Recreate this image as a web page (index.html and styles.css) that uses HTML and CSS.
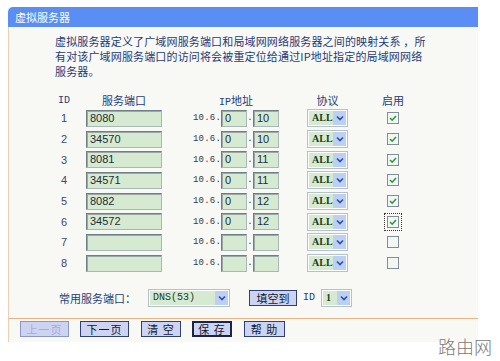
FILE: index.html
```html
<!DOCTYPE html>
<html>
<head>
<meta charset="utf-8">
<link rel="stylesheet" href="styles.css">
</head>
<body>
<div class="panel">
  <div class="title">虚拟服务器</div>
  <div class="body">
    <p class="desc">虚拟服务器定义了广域网服务端口和局域网网络服务器之间的映射关系 ，所<br>有对该广域网服务端口的访问将会被重定位给通过IP地址指定的局域网网络<br>服务器。</p>
    <div class="grid">
      <div class="c1 hd mono">ID</div>
      <div class="c2 hd"><span class="w-port">服务端口</span></div>
      <div class="c3 hd"><span class="w-ip"><span class="mono">IP</span>地址</span></div>
      <div class="c4 hd"><span class="w-sel">协议</span></div>
      <div class="c5 hd"><span class="w-chk">启用</span></div>

      <div class="c1 num">1</div>
      <div class="c2"><span class="inp port">8080</span></div>
      <div class="c3"><span class="pre">10.6.</span><span class="inp ip">0</span><span class="dot">.</span><span class="inp ip">10</span></div>
      <div class="c4"><span class="sel"><span class="val">ALL</span><span class="arr"><svg width="8" height="6" viewBox="0 0 8 6"><path d="M1 1.5 L4 4.5 L7 1.5" fill="none" stroke="#2c4fa8" stroke-width="1.6"/></svg></span></span></div>
      <div class="c5"><span class="chk on"><svg width="10" height="10" viewBox="0 0 10 10"><path d="M2 5 L4.2 7.2 L8 3" fill="none" stroke="#2a9a3a" stroke-width="1.6"/></svg></span></div>

      <div class="c1 num">2</div>
      <div class="c2"><span class="inp port">34570</span></div>
      <div class="c3"><span class="pre">10.6.</span><span class="inp ip">0</span><span class="dot">.</span><span class="inp ip">10</span></div>
      <div class="c4"><span class="sel"><span class="val">ALL</span><span class="arr"><svg width="8" height="6" viewBox="0 0 8 6"><path d="M1 1.5 L4 4.5 L7 1.5" fill="none" stroke="#2c4fa8" stroke-width="1.6"/></svg></span></span></div>
      <div class="c5"><span class="chk on"><svg width="10" height="10" viewBox="0 0 10 10"><path d="M2 5 L4.2 7.2 L8 3" fill="none" stroke="#2a9a3a" stroke-width="1.6"/></svg></span></div>

      <div class="c1 num">3</div>
      <div class="c2"><span class="inp port">8081</span></div>
      <div class="c3"><span class="pre">10.6.</span><span class="inp ip">0</span><span class="dot">.</span><span class="inp ip">11</span></div>
      <div class="c4"><span class="sel"><span class="val">ALL</span><span class="arr"><svg width="8" height="6" viewBox="0 0 8 6"><path d="M1 1.5 L4 4.5 L7 1.5" fill="none" stroke="#2c4fa8" stroke-width="1.6"/></svg></span></span></div>
      <div class="c5"><span class="chk on"><svg width="10" height="10" viewBox="0 0 10 10"><path d="M2 5 L4.2 7.2 L8 3" fill="none" stroke="#2a9a3a" stroke-width="1.6"/></svg></span></div>

      <div class="c1 num">4</div>
      <div class="c2"><span class="inp port">34571</span></div>
      <div class="c3"><span class="pre">10.6.</span><span class="inp ip">0</span><span class="dot">.</span><span class="inp ip">11</span></div>
      <div class="c4"><span class="sel"><span class="val">ALL</span><span class="arr"><svg width="8" height="6" viewBox="0 0 8 6"><path d="M1 1.5 L4 4.5 L7 1.5" fill="none" stroke="#2c4fa8" stroke-width="1.6"/></svg></span></span></div>
      <div class="c5"><span class="chk on"><svg width="10" height="10" viewBox="0 0 10 10"><path d="M2 5 L4.2 7.2 L8 3" fill="none" stroke="#2a9a3a" stroke-width="1.6"/></svg></span></div>

      <div class="c1 num">5</div>
      <div class="c2"><span class="inp port">8082</span></div>
      <div class="c3"><span class="pre">10.6.</span><span class="inp ip">0</span><span class="dot">.</span><span class="inp ip">12</span></div>
      <div class="c4"><span class="sel"><span class="val">ALL</span><span class="arr"><svg width="8" height="6" viewBox="0 0 8 6"><path d="M1 1.5 L4 4.5 L7 1.5" fill="none" stroke="#2c4fa8" stroke-width="1.6"/></svg></span></span></div>
      <div class="c5"><span class="chk on"><svg width="10" height="10" viewBox="0 0 10 10"><path d="M2 5 L4.2 7.2 L8 3" fill="none" stroke="#2a9a3a" stroke-width="1.6"/></svg></span></div>

      <div class="c1 num">6</div>
      <div class="c2"><span class="inp port">34572</span></div>
      <div class="c3"><span class="pre">10.6.</span><span class="inp ip">0</span><span class="dot">.</span><span class="inp ip">12</span></div>
      <div class="c4"><span class="sel"><span class="val">ALL</span><span class="arr"><svg width="8" height="6" viewBox="0 0 8 6"><path d="M1 1.5 L4 4.5 L7 1.5" fill="none" stroke="#2c4fa8" stroke-width="1.6"/></svg></span></span></div>
      <div class="c5"><span class="chk on focus"><svg width="10" height="10" viewBox="0 0 10 10"><path d="M2 5 L4.2 7.2 L8 3" fill="none" stroke="#2a9a3a" stroke-width="1.6"/></svg></span></div>

      <div class="c1 num">7</div>
      <div class="c2"><span class="inp port"></span></div>
      <div class="c3"><span class="pre">10.6.</span><span class="inp ip"></span><span class="dot">.</span><span class="inp ip"></span></div>
      <div class="c4"><span class="sel"><span class="val">ALL</span><span class="arr"><svg width="8" height="6" viewBox="0 0 8 6"><path d="M1 1.5 L4 4.5 L7 1.5" fill="none" stroke="#2c4fa8" stroke-width="1.6"/></svg></span></span></div>
      <div class="c5"><span class="chk"></span></div>

      <div class="c1 num">8</div>
      <div class="c2"><span class="inp port"></span></div>
      <div class="c3"><span class="pre">10.6.</span><span class="inp ip"></span><span class="dot">.</span><span class="inp ip"></span></div>
      <div class="c4"><span class="sel"><span class="val">ALL</span><span class="arr"><svg width="8" height="6" viewBox="0 0 8 6"><path d="M1 1.5 L4 4.5 L7 1.5" fill="none" stroke="#2c4fa8" stroke-width="1.6"/></svg></span></span></div>
      <div class="c5"><span class="chk"></span></div>
    </div>
    <div class="common">
      <span class="lbl">常用服务端口：</span>
      <span class="sel wide"><span class="val">DNS(53)</span><span class="arr"><svg width="8" height="6" viewBox="0 0 8 6"><path d="M1 1.5 L4 4.5 L7 1.5" fill="none" stroke="#2c4fa8" stroke-width="1.6"/></svg></span></span>
      <span class="btn fill">填空到</span>
      <span class="idl mono">ID</span>
      <span class="sel small"><span class="val">1</span><span class="arr"><svg width="8" height="6" viewBox="0 0 8 6"><path d="M1 1.5 L4 4.5 L7 1.5" fill="none" stroke="#2c4fa8" stroke-width="1.6"/></svg></span></span>
    </div>
  </div>
  <div class="btns">
    <span class="btn b1 disabled">上一页</span>
    <span class="btn b2">下一页</span>
    <span class="btn b3">清 空</span>
    <span class="btn b4 dflt">保 存</span>
    <span class="btn b5">帮 助</span>
  </div>
</div>
<div class="watermark">路由网</div>
</body>
</html>
```
FILE: styles.css
```css
html, body {
  margin: 0;
  padding: 0;
  background: #ffffff;
}
body {
  width: 500px;
  height: 361px;
  overflow: hidden;
  position: relative;
  font-family: "Noto Sans CJK SC", "Noto Sans", sans-serif;
  color: #22407a;
}
.mono {
  font-family: "Liberation Mono", "Noto Sans CJK SC", monospace;
}
.panel {
  margin: 7px 0 0 8px;
  width: 470px;
  background: #f8f8f5;
}
.title {
  height: 20px;
  line-height: 20px;
  background: #5b8ef4;
  color: #ffffff;
  font-size: 11px;
  padding-left: 7px;
  border-top-left-radius: 5px;
}
.body {
  border-left: 1px solid #f0cdb4;
  padding: 7px 0 11px 0;
}
.desc {
  margin: 0 0 0 46px;
  font-size: 11px;
  letter-spacing: 0.15px;
  line-height: 15px;
  color: #1f3a7a;
}
.grid {
  margin: 13px 0 0 39px;
  display: grid;
  grid-template-columns: 32px 82px 120px 80px 60px;
  grid-template-rows: 16px repeat(8, 20.7px);
  align-items: center;
}
.grid > div {
  display: flex;
  align-items: center;
  height: 100%;
}
.hd {
  font-size: 11px;
  color: #22407a;
}
.c1 { justify-content: center; }
.c2 { padding-left: 6px; }
.c3 { padding-left: 31px; }
.c4 { padding-left: 25px; }
.c5 { padding-left: 25px; }
.c1.hd { font-size: 10px; }
.w-port { width: 76px; text-align: center; }
.w-ip { width: 86px; text-align: center; }
.w-ip .mono { font-size: 10px; }
.w-sel { width: 41px; text-align: center; }
.w-chk { width: 12px; display: flex; justify-content: center; white-space: nowrap; }
.num {
  font-family: "Liberation Sans", sans-serif;
  font-size: 11px;
  color: #3a4a7a;
}
.inp {
  box-sizing: border-box;
  display: inline-block;
  height: 17px;
  line-height: 15px;
  background: #d6ead2;
  border: 1px solid #6f7f88;
  border-right-color: #a8b8b8;
  border-bottom-color: #a8b8b8;
  box-shadow: inset 1px 1px 0 #9aa8a8;
  font-family: "Liberation Sans", sans-serif;
  font-size: 11px;
  color: #1c2c3c;
  padding-left: 3px;
}
.port { width: 76px; }
.ip { width: 26px; }
.pre {
  font-family: "Liberation Mono", monospace;
  font-size: 9px;
  color: #333a50;
  width: 28px;
  letter-spacing: 0.2px;
}
.dot {
  width: 6px;
  font-family: "Liberation Mono", monospace;
  font-size: 9px;
  color: #333a50;
  text-align: center;
}
.sel {
  box-sizing: border-box;
  display: inline-flex;
  width: 41px;
  height: 18px;
  border: 1px solid #b4c0cc;
  background: #ffffff;
  padding: 1px;
}
.sel .val {
  flex: 1;
  background: #d6ead2;
  font-family: "Liberation Serif", serif;
  font-weight: bold;
  font-size: 10px;
  line-height: 14px;
  color: #1c3a1c;
  padding-left: 3px;
}
.sel .arr {
  width: 13px;
  background: #bcd0f2;
  display: flex;
  align-items: center;
  justify-content: center;
}
.chk {
  box-sizing: border-box;
  display: inline-flex;
  width: 12px;
  height: 12px;
  border: 1px solid #7e8e9a;
  background: #f4f6f4;
  align-items: center;
  justify-content: center;
}
.chk.focus {
  outline: 1px dotted #333333;
  outline-offset: 2px;
}
.common {
  margin: 15px 0 0 50px;
  display: flex;
  align-items: center;
  height: 18px;
}
.lbl {
  font-size: 11px;
  color: #22407a;
  width: 89px;
}
.sel.wide { width: 82px; }
.sel.wide .val { font-weight: normal; font-family: "Liberation Mono", monospace; font-size: 10px; }
.sel.small { width: 31px; }
.btn {
  box-sizing: border-box;
  display: inline-flex;
  align-items: center;
  justify-content: center;
  height: 16px;
  background: #cdd4f2;
  border: 1px solid #2f3f78;
  font-size: 11px;
  color: #101830;
}
.btn.fill {
  margin-left: 19px;
  width: 48px;
  height: 16px;
}
.idl {
  font-size: 10px;
  color: #22407a;
  margin: 0 6px 0 6px;
}
.btns {
  border-top: 1px solid #f0b084;
  border-left: 1px solid #f0cdb4;
  padding: 2px 0 5px 11px;
  display: flex;
  gap: 0;
}
.btns .btn { letter-spacing: 1px; }
.b1 { width: 49px; }
.b2 { width: 49px; margin-left: 11px; }
.b3 { width: 40px; margin-left: 12px; }
.b4 { width: 40px; margin-left: 11px; }
.b5 { width: 41px; margin-left: 12px; }
.btn.disabled {
  color: #a6acd6;
  border-color: #8a96c8;
}
.btn.dflt {
  border: 2px solid #1c2448;
}
.watermark {
  position: absolute;
  left: 438px;
  top: 333px;
  font-size: 18px;
  font-weight: 300;
  color: #7a7a7a;
  letter-spacing: 0px;
}
```
